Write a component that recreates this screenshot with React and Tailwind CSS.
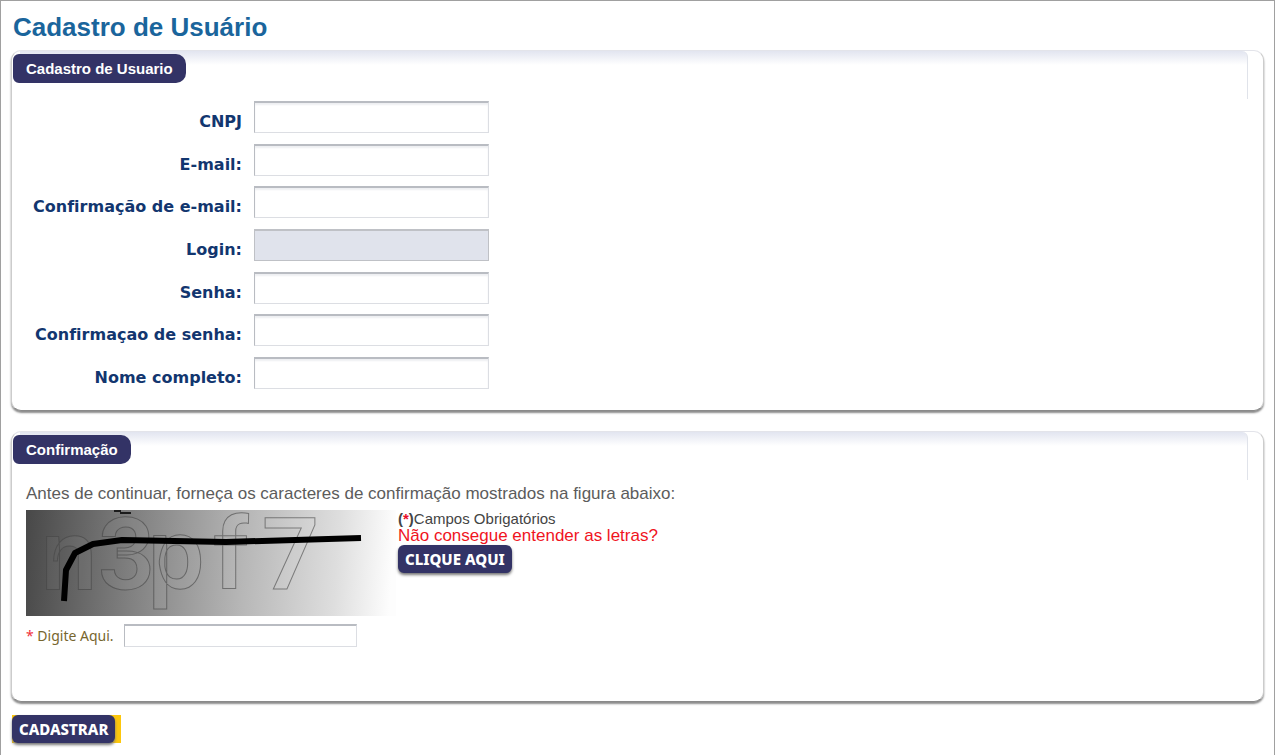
import React, { useState } from "react";

const FIELDS = [
  { id: "cnpj", label: "CNPJ", type: "text" },
  { id: "email", label: "E-mail:", type: "email" },
  { id: "email2", label: "Confirmação de e-mail:", type: "email" },
  { id: "login", label: "Login:", type: "text", disabled: true },
  { id: "senha", label: "Senha:", type: "password" },
  { id: "senha2", label: "Confirmaçao de senha:", type: "password" },
  { id: "nome", label: "Nome completo:", type: "text" },
];

const inputBorder =
  "border border-t-2 border-t-[#b9bcc2] border-l-[#b9bcc2] border-r-[#dcdee3] border-b-[#dcdee3]";

const buttonStyle =
  "block rounded-[6px] bg-[#333366] px-[7px] font-['Noto_Sans',Tahoma,sans-serif] text-[15px] leading-7 font-extrabold text-white shadow-[0_2px_3px_#777777]";

function Panel({ title, className, children }) {
  return (
    <section
      className={`relative rounded-[10px] border border-t-[#e3e4ea] border-x-[#cccccc] border-b-[#8a8a8a] bg-white shadow-[0_2px_2px_#8c8c8c] ${className}`}
    >
      {/* soft strip along the top, behind the title tab */}
      <div className="absolute left-2 right-[15px] top-0 h-12 rounded-tr-[6px] border-r border-[#e0e3ea] bg-linear-to-b from-[#e2e5f0] to-white to-[14px]" />
      <h2 className="relative mt-[3px] ml-px inline-block rounded-[6px] rounded-r-[10px] bg-[#333366] px-[13px] text-[15px] leading-[29px] font-bold text-white">
        {title}
      </h2>
      {children}
    </section>
  );
}

function Captcha() {
  return (
    <svg viewBox="0 0 370 106" className="h-[106px] w-[370px] shrink-0" role="img">
      <defs>
        <linearGradient id="fade" x1="0" y1="0" x2="1" y2="0.02">
          <stop offset="0" stopColor="#484848" />
          <stop offset="0.3" stopColor="#818181" />
          <stop offset="0.6" stopColor="#b7b7b7" />
          <stop offset="0.85" stopColor="#dedede" />
          <stop offset="1" stopColor="#fdfdfd" />
        </linearGradient>
      </defs>
      <rect width="370" height="106" fill="url(#fade)" />
      <g
        fontFamily="Roboto, 'Liberation Sans', sans-serif"
        fontWeight="600"
        fontSize="100"
        fill="#ffffff"
        fillOpacity="0.04"
        stroke="#444444"
        strokeOpacity="0.6"
        strokeWidth="1"
      >
        <text x="15" y="79">n</text>
        <text x="72" y="79">3</text>
        <text x="122" y="79">p</text>
        <text x="187" y="79">f</text>
        <text x="236" y="79">7</text>
      </g>
      <path d="M88 1 L95 1 M94 3 L105 3" stroke="#1c1c1c" strokeWidth="2" />
      <path
        d="M38 91 L40 60 L49 43 L67 34 L96 30 L200 32 L335 28"
        fill="none"
        stroke="#000000"
        strokeWidth="6"
        strokeLinejoin="round"
      />
    </svg>
  );
}

function App() {
  const [values, setValues] = useState({});
  const [code, setCode] = useState("");

  const handleChange = (e) => {
    setValues({ ...values, [e.target.id]: e.target.value });
  };

  return (
    <form
      onSubmit={(e) => e.preventDefault()}
      className="min-h-screen border border-b-0 border-[#a0a0a0] bg-white px-[10px] pt-2 font-['Liberation_Sans',Arial,sans-serif]"
    >
      <h1 className="px-0.5 text-[26px] leading-9 font-bold text-[#1a659c]">Cadastro de Usuário</h1>

      <Panel title="Cadastro de Usuario" className="mt-[5px] h-[361px]">
        <div className="relative mt-[18px] flex h-[288px] flex-col justify-between">
          {FIELDS.map((f) => (
            <div key={f.id} className="flex items-center">
              <label
                htmlFor={f.id}
                className="w-[242px] shrink-0 pt-[10px] pr-3 text-right font-['DejaVu_Sans',Verdana,sans-serif] text-base leading-[22px] font-bold text-[#12366f] [font-variant-ligatures:none]"
              >
                {f.label}
              </label>
              <input
                id={f.id}
                type={f.type}
                disabled={f.disabled}
                value={values[f.id] || ""}
                onChange={handleChange}
                className={`h-8 w-[235px] bg-white px-2 shadow-[inset_0_2px_2px_#eeeff2] disabled:bg-[#e0e3ec] disabled:shadow-none ${inputBorder} disabled:border-[#bfc1c6]`}
              />
            </div>
          ))}
        </div>
      </Panel>

      <Panel title="Confirmação" className="mt-5 h-[271px]">
        <div className="relative px-[14px] pt-4">
          <p className="text-[17px] leading-7 text-[#5c5c5c]">
            Antes de continuar, forneça os caracteres de confirmação mostrados na figura abaixo:
          </p>
          <div className="mt-0.5 flex gap-0.5">
            <Captcha />
            <div>
              <p className="text-[15px] leading-[17px] text-[#444444]">
                <b>
                  (<span className="text-[#e8102a]">*</span>)
                </b>
                Campos Obrigatórios
              </p>
              <p className="text-[17px] leading-[18px] text-[#f0141e]">Não consegue entender as letras?</p>
              <button type="button" className={buttonStyle}>
                CLIQUE AQUI
              </button>
            </div>
          </div>
          <div className="mt-2 flex items-center gap-[10px]">
            <label
              htmlFor="code"
              className="font-['Noto_Sans',Tahoma,sans-serif] text-sm leading-5 text-[#77662e]"
            >
              <span className="text-[#f0303a]">*</span> Digite Aqui.
            </label>
            <input
              id="code"
              type="text"
              value={code}
              onChange={(e) => setCode(e.target.value)}
              className={`h-[23px] w-[233px] bg-white px-1 ${inputBorder}`}
            />
          </div>
        </div>
      </Panel>

      <div className="mt-[13px] ml-px inline-block bg-[#fdc70c] pr-[6px]">
        <button type="submit" className={buttonStyle}>
          CADASTRAR
        </button>
      </div>
    </form>
  );
}

export default App;
